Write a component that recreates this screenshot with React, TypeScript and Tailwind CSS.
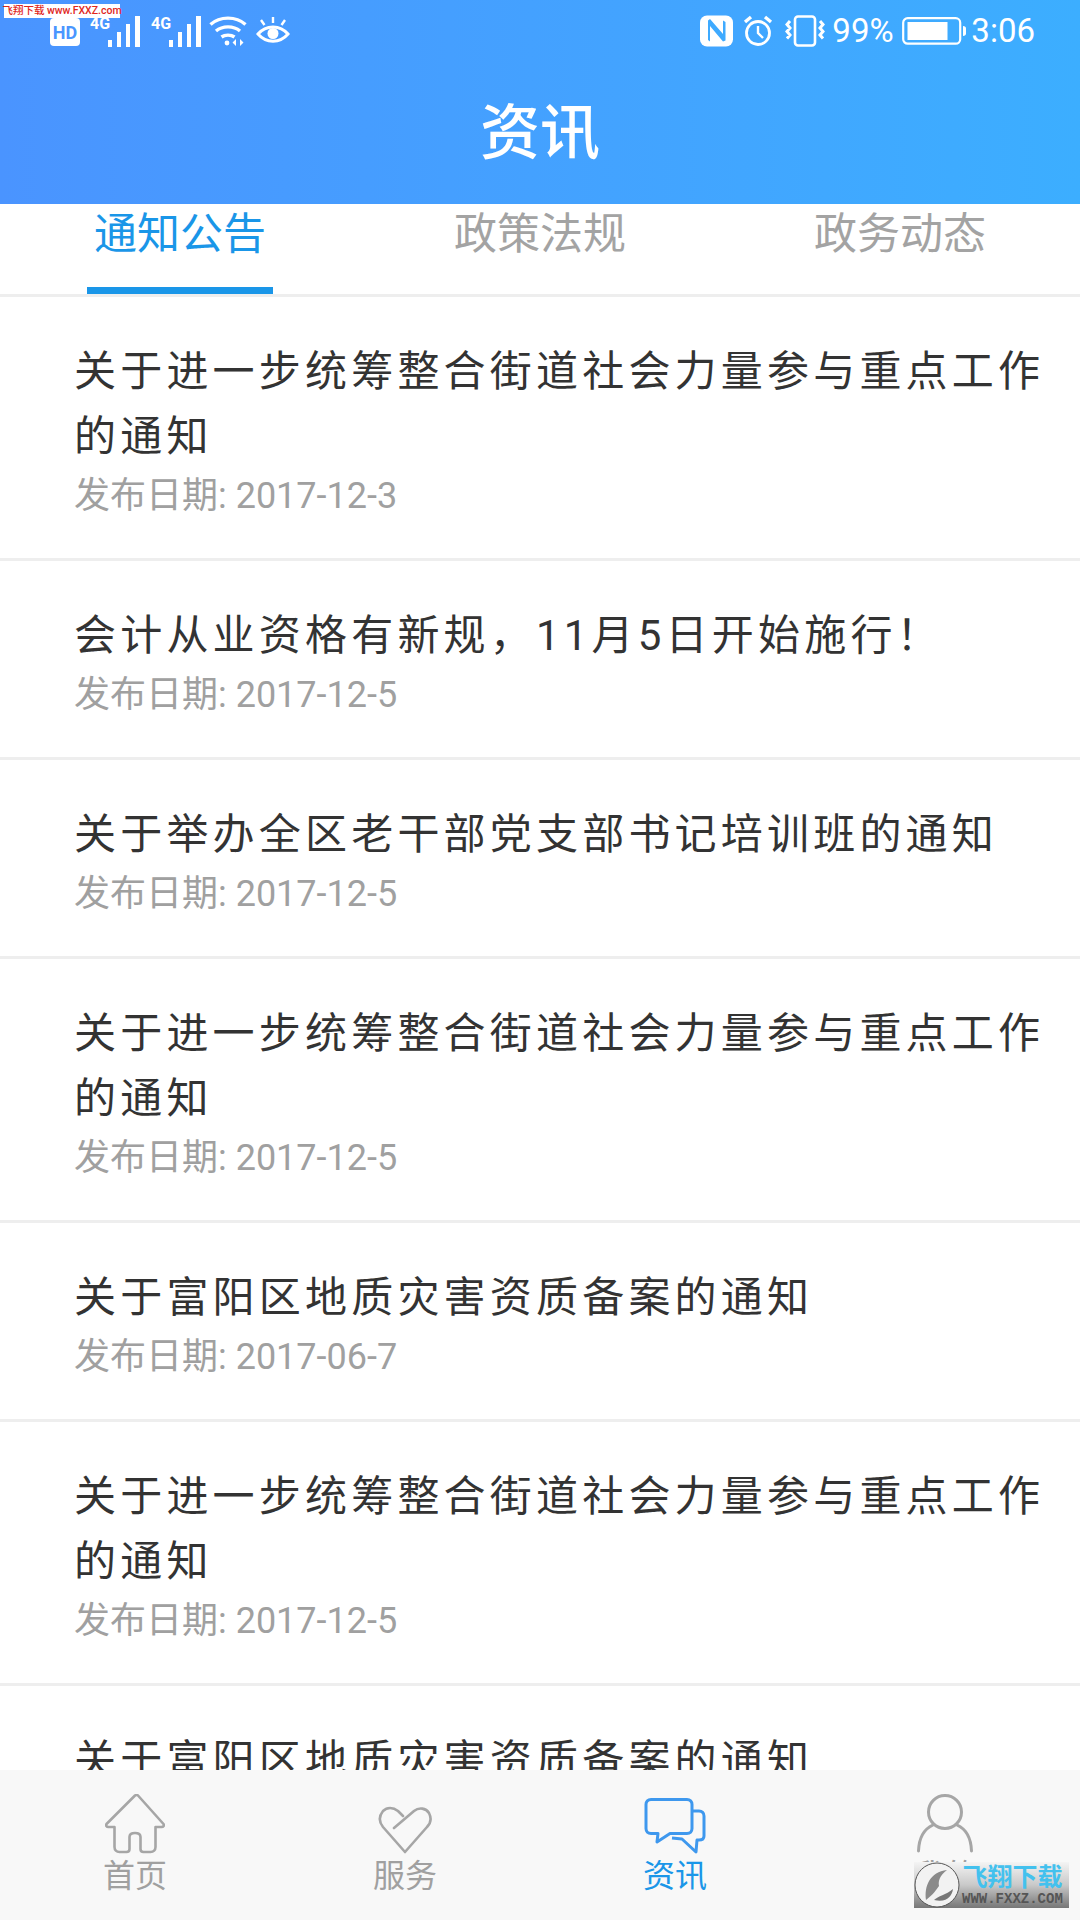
const FONT = "font-['Roboto','Noto_Sans_CJK_SC',sans-serif]";

type Notice = { title: string; date: string };

const NOTICES: Notice[] = [
  { title: "关于进一步统筹整合街道社会力量参与重点工作的通知", date: "2017-12-3" },
  { title: "会计从业资格有新规，11月5日开始施行！", date: "2017-12-5" },
  { title: "关于举办全区老干部党支部书记培训班的通知", date: "2017-12-5" },
  { title: "关于进一步统筹整合街道社会力量参与重点工作的通知", date: "2017-12-5" },
  { title: "关于富阳区地质灾害资质备案的通知", date: "2017-06-7" },
  { title: "关于进一步统筹整合街道社会力量参与重点工作的通知", date: "2017-12-5" },
  { title: "关于富阳区地质灾害资质备案的通知", date: "2017-12-5" },
];

function Signal() {
  return (
    <svg width="50" height="32" viewBox="0 0 50 32" fill="white">
      <text x="0" y="14" fontSize="16" fontWeight="700" fontFamily="Roboto">4G</text>
      <rect x="18" y="25" width="4" height="7" />
      <rect x="27" y="17" width="4" height="15" />
      <rect x="36" y="9" width="4" height="23" />
      <rect x="45" y="1" width="5" height="31" />
    </svg>
  );
}

function StatusBar() {
  return (
    <div className="flex h-[60px] items-center justify-between pl-[50px] pr-[45px] pt-[2px] text-white">
      <div className="flex items-center">
        <svg width="30" height="28" viewBox="0 0 30 28" className="mt-[2px]">
          <rect width="30" height="28" rx="4" fill="white" />
          <text x="15" y="21" textAnchor="middle" fontSize="18" fontWeight="700" fontFamily="Roboto" fill="#4a96ff">HD</text>
        </svg>
        <div className="ml-[10px]"><Signal /></div>
        <div className="ml-[11px]"><Signal /></div>
        <svg width="38" height="32" viewBox="0 0 38 32" fill="none" stroke="white" strokeWidth="3.4" className="ml-[8px]">
          <path d="M1.500 9.500C11 1 27 1 36.500 9.500" />
          <path d="M7 16c6.500-5.500 17.500-5.500 24 0" />
          <path d="M12.500 22c3.500-2.500 9.500-2.500 13 0" />
          <circle cx="18" cy="28" r="2.400" fill="white" stroke="none" />
          <path d="M27 24l-3.500 3.500 3.500 3.500zM31 24l3.500 3.500-3.500 3.500z" fill="white" stroke="none" />
        </svg>
        <svg width="34" height="32" viewBox="0 0 34 32" fill="none" stroke="white" strokeWidth="3" className="ml-[9px]">
          <path d="M2 19c8-9.500 22-9.500 30 0-8 9.500-22 9.500-30 0z" />
          <circle cx="17" cy="18.500" r="5.500" fill="white" stroke="none" />
          <path d="M17 2v6M5 5l3.500 5M29 5l-3.500 5" strokeWidth="2.400" />
        </svg>
      </div>
      <div className="flex items-center">
        <svg width="33" height="32" viewBox="0 0 33 32">
          <rect width="33" height="31" y="0.500" rx="7" fill="white" />
          <path d="M8 5.500 8 25l2 1.500V11l13 15.500 2.500-1V7L23 5.500V19L10 4z" fill="#3eaaff" />
        </svg>
        <svg width="30" height="32" viewBox="0 0 30 32" fill="none" stroke="white" strokeWidth="2.800" className="ml-[10px]">
          <circle cx="15" cy="18" r="11.500" />
          <path d="M15 11v7l5 5" strokeWidth="2.400" />
          <path d="M2 7l6-5M28 7l-6-5" strokeWidth="3.400" />
        </svg>
        <svg width="40" height="32" viewBox="0 0 40 32" fill="none" stroke="white" strokeWidth="2.600" className="ml-[12px]">
          <rect x="10" y="1.500" width="20" height="29" rx="3" />
          <path d="M5 6 2 9.500l3 3.500-3 3.500L5 20l-3 3.500M35 6l3 3.500-3 3.500 3 3.500-3 3.500 3 3.500" strokeWidth="3" />
        </svg>
        <span className={`ml-[7px] w-[61px] text-[33px] leading-[36px] ${FONT}`}>99%</span>
        <svg width="64" height="28" viewBox="0 0 64 28" fill="none" className="ml-[9px]">
          <rect x="1.200" y="1.200" width="57" height="25.500" rx="4.500" stroke="white" strokeWidth="2.200" />
          <rect x="5.500" y="5" width="40" height="18" fill="white" />
          <path d="M61 9c2 0 3 1 3 2.500v5c0 1.500-1 2.500-3 2.500z" fill="white" />
        </svg>
        <span className={`ml-[5px] text-[33px] leading-[36px] ${FONT}`}>3:06</span>
      </div>
    </div>
  );
}

function HomeIcon() {
  return (
    <svg width="60" height="60" viewBox="0 0 60 60" fill="none" stroke="#a6a6a6" strokeWidth="2.600" strokeLinejoin="round">
      <path d="M30 1.500 1.500 30c-1 1.500 0 3 2 3h6v20c0 3 2 5 5 5h7c2 0 3-1 3-3V43c0-3 2-4 5.500-4s5.500 1 5.500 4v12c0 2 1 3 3 3h7c3 0 5-2 5-5V33h6c2 0 3-1.500 2-3L33 1.500c-1-.7-2-.7-3 0z" />
    </svg>
  );
}

function HeartIcon() {
  return (
    <svg width="54" height="48" viewBox="0 0 54 48" fill="none" stroke="#a6a6a6" strokeWidth="2.600" strokeLinecap="round" strokeLinejoin="round">
      <path d="M16 22 36 5c5-4 12-3 15 2 2.500 5 2 10-2 14L27 46 5 21C1 16 1 10 5 5c4-4 10-4 15 0l5 5" />
    </svg>
  );
}

function ChatIcon() {
  return (
    <svg width="62" height="56" viewBox="0 0 62 56" fill="none" stroke="#3e98ee" strokeWidth="3" strokeLinejoin="round">
      <path d="M7 1.500h36c3 0 5 2 5 5v24c0 3-2 5-5 5H26L13 44l1-8.500H7c-3 0-5-2-5-5v-24c0-3 2-5 5-5z" />
      <path d="M49 13h6c3 0 5 2 5 5v20c0 3-2 4-5 4h-2l-1 12-14-13-10-1" />
    </svg>
  );
}

function UserIcon() {
  return (
    <svg width="56" height="60" viewBox="0 0 56 60" fill="none" stroke="#a6a6a6" strokeWidth="3" strokeLinecap="round">
      <circle cx="28" cy="18" r="16.500" />
      <path d="M16 31C7 35 2 44 1.500 57M40 31c9 4 14 13 14.500 26" />
    </svg>
  );
}

const NAV = [
  { label: "首页", icon: <HomeIcon />, active: false },
  { label: "服务", icon: <HeartIcon />, active: false },
  { label: "资讯", icon: <ChatIcon />, active: true },
  { label: "我的", icon: <UserIcon />, active: false },
];

export default function App() {
  return (
    <div className={`relative flex h-[1920px] w-[1080px] flex-col overflow-hidden bg-white ${FONT}`}>
      <header className="h-[204px] shrink-0 bg-gradient-to-r from-[#4a94ff] to-[#3caeff]">
        <StatusBar />
        <h1 className="mt-[40px] text-center text-[60px] font-medium leading-[68px] text-white">资讯</h1>
      </header>

      <nav className="grid h-[93px] shrink-0 grid-cols-3 border-b-[3px] border-[#eeeeee] text-center text-[43px] leading-[60px] text-[#a3a3a3]">
        {["通知公告", "政策法规", "政务动态"].map((tab, i) => (
          <div key={tab} className="flex justify-center">
            <div className={`relative h-[90px] w-[186px] whitespace-nowrap ${i === 0 ? "border-b-[7px] border-[#1a96e8] text-[#1a96e8]" : ""}`}>
              {tab}
            </div>
          </div>
        ))}
      </nav>

      <ul className="min-h-0 flex-1 overflow-hidden">
        {NOTICES.map((n, i) => (
          <li key={i} className="border-b-[3px] border-[#eeeeee] pb-[35px] pl-[74px] pr-[30px] pt-[42px]">
            <h2 className="text-[42px] leading-[65px] tracking-[4.2px] text-[#333333]">{n.title}</h2>
            <p className="text-[36px] leading-[54px] text-[#a0a0a0]">发布日期: {n.date}</p>
          </li>
        ))}
      </ul>

      <footer className="grid h-[150px] shrink-0 grid-cols-4 bg-[#f8f8f8]">
        {NAV.map((item) => (
          <div key={item.label} className="flex flex-col items-center">
            <div className="flex h-[88px] items-end justify-center pb-[4px]">{item.icon}</div>
            <span className={`text-[32px] leading-[36px] ${item.active ? "text-[#1a96e8]" : "text-[#a0a0a0]"}`}>
              {item.label}
            </span>
          </div>
        ))}
      </footer>

      {/* site watermarks burnt into the screenshot */}
      <div className="absolute left-[4px] top-[4px] flex h-[14px] w-[116px] items-center justify-center whitespace-nowrap bg-white text-[10.500px] font-medium leading-[14px] text-[#e0261c]">
        飞翔下载 www.FXXZ.com
      </div>
      <div className="absolute left-[914px] top-[1862px] flex h-[46px] w-[155px] items-center bg-gradient-to-b from-[#f4f4f4] via-[#c9c9c9] to-[#777777]">
        <svg width="46" height="46" viewBox="0 0 46 46" className="shrink-0">
          <circle cx="23" cy="23" r="22" fill="#f2f2f2" stroke="#555555" strokeWidth="1" />
          <path d="M12 38C10 24 16 10 33 8c-7 5-9 11-8 16-3 4-5 8-13 14z" fill="#8a8a8a" />
          <path d="M20 38c4-4 12-5 19-11-1 7-6 14-19 11z" fill="#777777" />
        </svg>
        <div className="ml-[2px] flex flex-col items-center whitespace-nowrap">
          <span className="text-[25px] font-bold leading-[28px] text-[#43c1ee]">飞翔下载</span>
          <span className="font-['Liberation_Mono',monospace] text-[14px] font-bold leading-[14px] text-[#555555]">WWW.FXXZ.COM</span>
        </div>
      </div>
    </div>
  );
}
